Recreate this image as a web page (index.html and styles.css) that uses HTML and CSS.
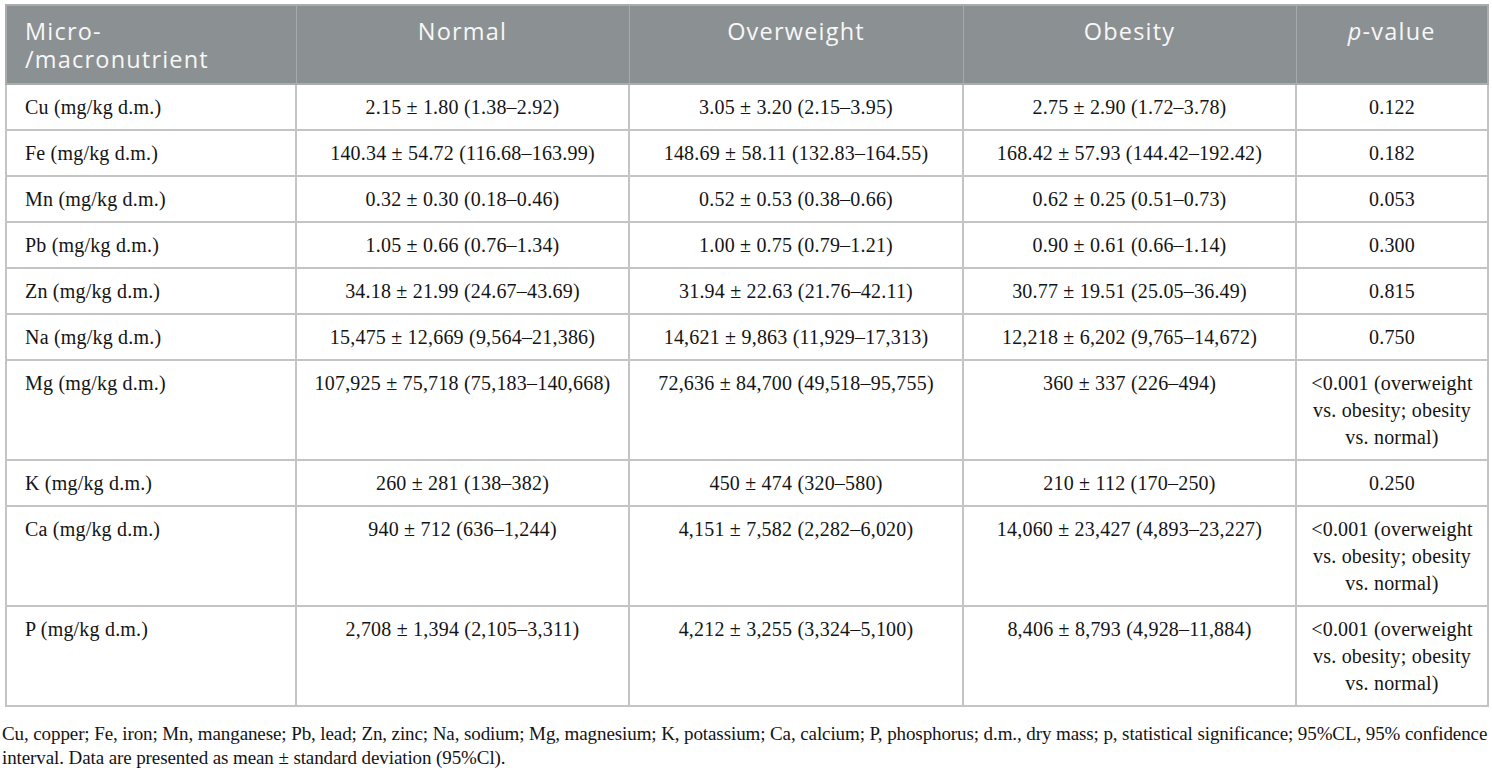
FILE: index.html
```html
<!DOCTYPE html>
<html lang="en">
<head>
<meta charset="utf-8">
<title>Micro/macronutrients table</title>
<link rel="stylesheet" href="styles.css">
</head>
<body>
<div class="wrap">
  <table class="data">
    <colgroup>
      <col class="c1"><col class="c2"><col class="c3"><col class="c4"><col class="c5">
    </colgroup>
    <thead>
      <tr>
        <th class="left"><span class="hl">Micro-</span><span class="hl">/macronutrient</span></th>
        <th>Normal</th>
        <th>Overweight</th>
        <th>Obesity</th>
        <th><i>p</i>-value</th>
      </tr>
    </thead>
    <tbody>
      <tr><td class="left">Cu (mg/kg d.m.)</td><td>2.15 ± 1.80 (1.38–2.92)</td><td>3.05 ± 3.20 (2.15–3.95)</td><td>2.75 ± 2.90 (1.72–3.78)</td><td>0.122</td></tr>
      <tr><td class="left">Fe (mg/kg d.m.)</td><td>140.34 ± 54.72 (116.68–163.99)</td><td>148.69 ± 58.11 (132.83–164.55)</td><td>168.42 ± 57.93 (144.42–192.42)</td><td>0.182</td></tr>
      <tr><td class="left">Mn (mg/kg d.m.)</td><td>0.32 ± 0.30 (0.18–0.46)</td><td>0.52 ± 0.53 (0.38–0.66)</td><td>0.62 ± 0.25 (0.51–0.73)</td><td>0.053</td></tr>
      <tr><td class="left">Pb (mg/kg d.m.)</td><td>1.05 ± 0.66 (0.76–1.34)</td><td>1.00 ± 0.75 (0.79–1.21)</td><td>0.90 ± 0.61 (0.66–1.14)</td><td>0.300</td></tr>
      <tr><td class="left">Zn (mg/kg d.m.)</td><td>34.18 ± 21.99 (24.67–43.69)</td><td>31.94 ± 22.63 (21.76–42.11)</td><td>30.77 ± 19.51 (25.05–36.49)</td><td>0.815</td></tr>
      <tr><td class="left">Na (mg/kg d.m.)</td><td>15,475 ± 12,669 (9,564–21,386)</td><td>14,621 ± 9,863 (11,929–17,313)</td><td>12,218 ± 6,202 (9,765–14,672)</td><td>0.750</td></tr>
      <tr><td class="left">Mg (mg/kg d.m.)</td><td>107,925 ± 75,718 (75,183–140,668)</td><td>72,636 ± 84,700 (49,518–95,755)</td><td>360 ± 337 (226–494)</td><td class="pv">&lt;0.001 (overweight<br>vs. obesity; obesity<br>vs. normal)</td></tr>
      <tr><td class="left">K (mg/kg d.m.)</td><td>260 ± 281 (138–382)</td><td>450 ± 474 (320–580)</td><td>210 ± 112 (170–250)</td><td>0.250</td></tr>
      <tr><td class="left">Ca (mg/kg d.m.)</td><td>940 ± 712 (636–1,244)</td><td>4,151 ± 7,582 (2,282–6,020)</td><td>14,060 ± 23,427 (4,893–23,227)</td><td class="pv">&lt;0.001 (overweight<br>vs. obesity; obesity<br>vs. normal)</td></tr>
      <tr><td class="left">P (mg/kg d.m.)</td><td>2,708 ± 1,394 (2,105–3,311)</td><td>4,212 ± 3,255 (3,324–5,100)</td><td>8,406 ± 8,793 (4,928–11,884)</td><td class="pv">&lt;0.001 (overweight<br>vs. obesity; obesity<br>vs. normal)</td></tr>
    </tbody>
  </table>
  <p class="caption">Cu, copper; Fe, iron; Mn, manganese; Pb, lead; Zn, zinc; Na, sodium; Mg, magnesium; K, potassium; Ca, calcium; P, phosphorus; d.m., dry mass; p, statistical significance; 95%CL, 95% confidence<br>interval. Data are presented as mean ± standard deviation (95%Cl).</p>
</div>
</body>
</html>
```

FILE: styles.css
```css
html, body {
  margin: 0;
  padding: 0;
  background: #ffffff;
}

.wrap {
  padding: 4px 5px 0 5px;
}

.data {
  width: 1482px;
  table-layout: fixed;
  border-collapse: collapse;
  border: 2px solid #a9aeac;
  font-family: "Liberation Serif", "Times New Roman", serif;
  font-size: 20px;
  color: #141414;
}

.c1 { width: 290px; }
.c2 { width: 333px; }
.c3 { width: 334px; }
.c4 { width: 333px; }
.c5 { width: 192px; }

.data thead th {
  background: #8b9092;
  color: #f7f7f7;
  font-family: "Open Sans", "Noto Sans", sans-serif;
  font-weight: 400;
  font-size: 23.5px;
  letter-spacing: 1.2px;
  line-height: 28px;
  text-align: center;
  vertical-align: top;
  padding: 11px 8px 10px 8px;
  border: 2px solid #a9aeac;
  border-left: 1px solid #a6aaab;
  border-right: 1px solid #a6aaab;
  white-space: nowrap;
}

.data th .hl {
  display: block;
  height: 28px;
}

.data td {
  line-height: 27px;
  text-align: center;
  vertical-align: top;
  padding: 9px 8px 8px 8px;
  border: 2px solid #c2c5c4;
  white-space: nowrap;
  letter-spacing: 0.2px;
}

.data th.left,
.data td.left {
  text-align: left;
  padding-left: 18px;
}

.data td.pv {
  padding-left: 2px;
  padding-right: 2px;
}

.caption {
  margin: 15px 0 0 -3px;
  font-family: "Liberation Serif", "Times New Roman", serif;
  font-size: 19px;
  letter-spacing: -0.1px;
  line-height: 24px;
  color: #141414;
  white-space: nowrap;
}
```
